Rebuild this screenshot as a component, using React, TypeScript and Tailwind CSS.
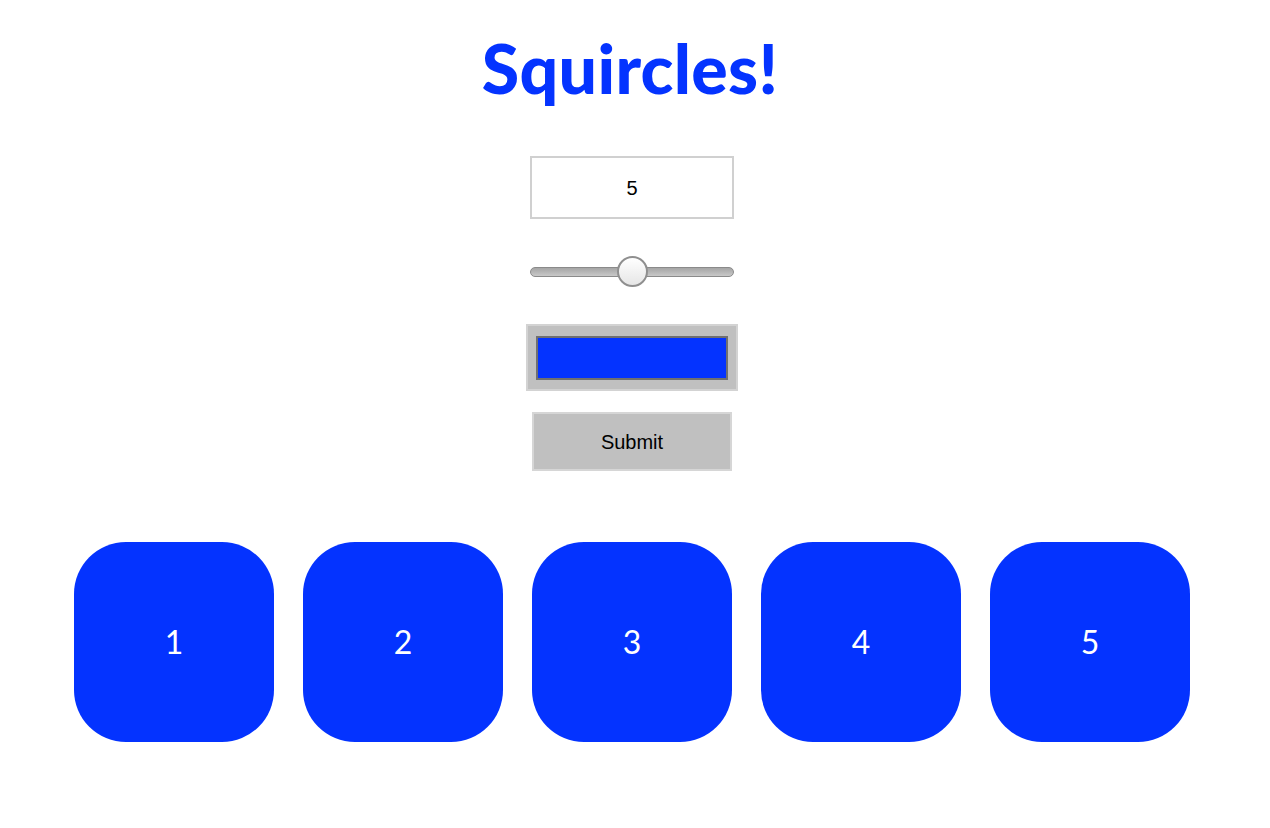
export default function App() {
  const boxes = [1, 2, 3, 4, 5]

  return (
    <div className="min-h-[828px] bg-white font-['Liberation_Sans',sans-serif]">
      {/* Title */}
      <h1 className="pr-[10px] pt-[28px] text-center font-['Lato',sans-serif] text-[68px] font-black leading-[80px] tracking-[0.3px] text-[#0433ff]">
        Squircles!
      </h1>

      {/* Controls */}
      <div className="mt-[48px] flex flex-col items-center pr-[6px]">
        <div className="flex h-[63px] w-[204px] items-center justify-center border-2 border-[#d0d0d0] text-[20px] text-black">
          5
        </div>

        {/* Slider */}
        <div className="relative mt-[37px] h-[31px] w-[204px]">
          <div className="absolute left-0 right-0 top-[11px] h-[10px] rounded-full border border-[#8a8a8a] bg-gradient-to-b from-[#a5a5a5] to-[#c8c8c8]" />
          <div className="absolute left-[87px] top-0 h-[31px] w-[31px] rounded-full border-2 border-[#8f8f8f] bg-gradient-to-b from-white to-[#e6e6e6]" />
        </div>

        {/* Colour picker */}
        <div className="mt-[37px] flex h-[67px] w-[212px] items-center justify-center border-2 border-[#d3d3d3] bg-[#c0c0c0]">
          <div className="h-[44px] w-[192px] border-2 border-[#707070] bg-[#0433ff]" />
        </div>

        <button className="mt-[21px] h-[59px] w-[200px] border-2 border-[#d6d6d6] bg-[#c0c0c0] text-[20px] text-black">
          Submit
        </button>
      </div>

      {/* Squircles */}
      <div className="mt-[71px] flex justify-center gap-[29px] pr-[6px]">
        {boxes.map((n) => (
          <div
            key={n}
            className="flex h-[200px] w-[200px] items-center justify-center rounded-[52px] bg-[#0433ff] font-['Lato',sans-serif] text-[32px] text-white"
          >
            {n}
          </div>
        ))}
      </div>
    </div>
  )
}
